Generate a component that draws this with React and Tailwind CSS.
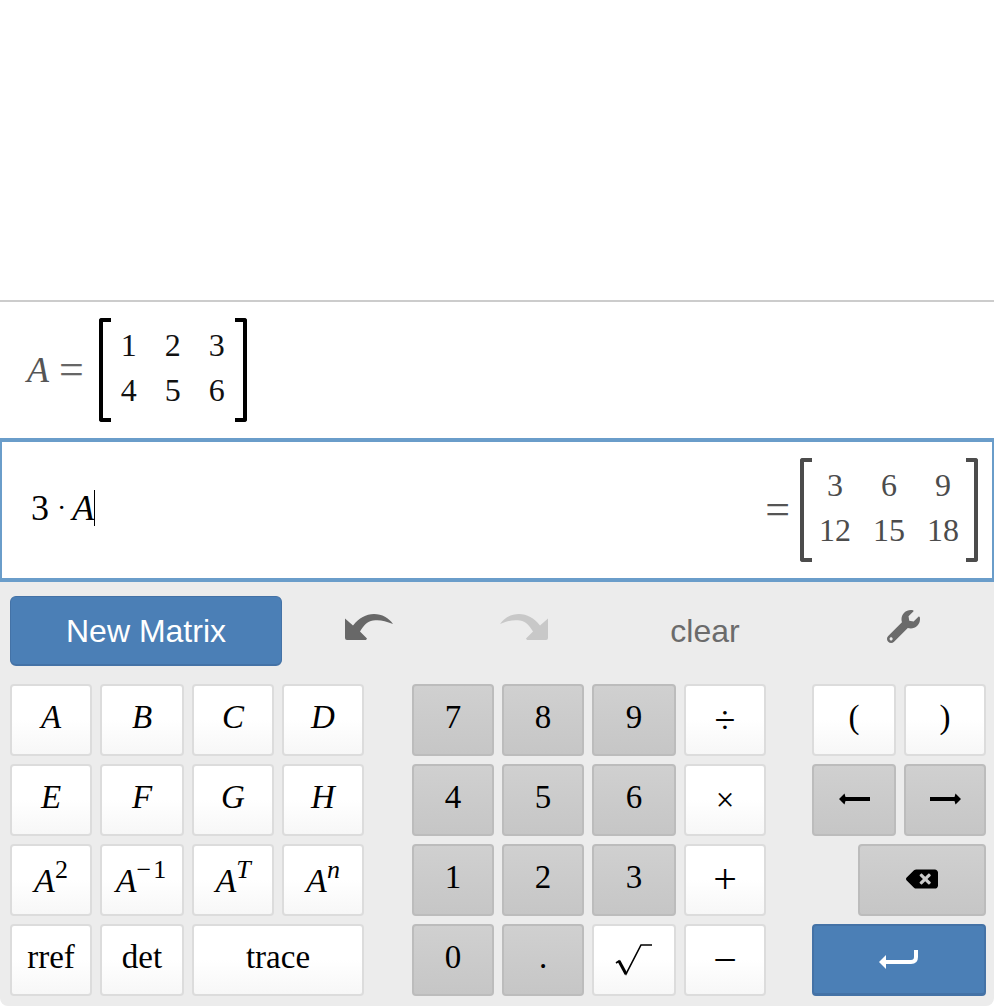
import React from "react";
import { FaWrench, FaBackspace } from "react-icons/fa";

const serif = "font-['Liberation_Serif',serif]";
const white = "bg-gradient-to-b from-white from-50% to-[#f7f7f7] border-[#dcdcdc] text-black";
const gray = "bg-gradient-to-b from-[#d0d0d0] to-[#c6c6c6] border-[#bcbcbc] text-black";
const blue = "bg-[#4b7fb6] border-[#4472a6] text-white";

function Key({ kind = "white", icon = false, className = "", children }) {
  const tone = kind === "gray" ? gray : kind === "blue" ? blue : white;
  return (
    <div className={`flex items-center justify-center h-[72px] rounded-[4px] border-2 ${serif} text-[33px] leading-none ${icon ? "" : "pb-[6px]"} ${tone} ${className}`}>
      {children}
    </div>
  );
}

function Matrix({ rows, colW, color, textColor }) {
  const edge = `w-[12px] h-[104px] border-y-4 ${color} shrink-0`;
  return (
    <div className="flex items-center">
      <div className={`${edge} border-l-4 rounded-l-[3px]`} />
      <div className={`-mx-[4px] pb-[4px] grid grid-cols-3 ${serif} text-[32px] leading-[45px] text-center ${textColor}`}>
        {rows.flat().map((v, i) => (
          <div key={i} className={colW}>{v}</div>
        ))}
      </div>
      <div className={`${edge} border-r-4 rounded-r-[3px]`} />
    </div>
  );
}

function Undo({ color, flip }) {
  return (
    <svg width="48" height="26" viewBox="0 0 48 26" className={flip ? "-scale-x-100" : ""}>
      <path
        fill={color}
        d="M0 4.5 L8 11.5 C14 4 21 0 29 0 C37 0 44 4 48 10 C40 6.5 34 5.5 28 6.5 C22 7.5 19 11 15 17.5 L22 24.5 L21 26 L2 26 Q0 26 0 24 Z"
      />
    </svg>
  );
}

function Arrow({ right }) {
  return (
    <svg width="31" height="12" viewBox="0 0 31 12" className={right ? "-scale-x-100" : ""}>
      <path fill="#000" d="M0 6 L5.5 0.5 L6.5 4 L31 4 L31 8 L6.5 8 L5.5 11.5 Z" />
    </svg>
  );
}

function Pow({ sup, italic, wide }) {
  return (
    <span className="whitespace-nowrap">
      <i className="text-[34px]">A</i>
      <span className={`text-[26px] align-[14px] ${italic ? "italic" : ""} ${wide ? "tracking-[2px]" : ""}`}>{sup}</span>
    </span>
  );
}

export default function App() {
  return (
    <div className="w-[994px] h-[1006px] bg-white flex flex-col overflow-hidden">
      <div className="h-[300px] shrink-0" />

      <div className="h-[138px] shrink-0 border-t-2 border-[#cccccc] flex items-center pl-[27px]">
        <span className={`${serif} italic text-[36px] text-[#555555] leading-none`}>A</span>
        <span className={`${serif} text-[44px] text-[#666666] leading-none ml-[10px] mr-[15px]`}>=</span>
        <Matrix
          rows={[[1, 2, 3], [4, 5, 6]]}
          colW="w-[44px]"
          color="border-black"
          textColor="text-[#111111]"
        />
      </div>

      <div className="h-[144px] shrink-0 border-y-4 border-x-2 border-[#6a9dca] flex items-center justify-between pl-[29px] pr-[14px]">
        <div className={`flex items-center pb-[4px] ${serif} text-[36px] leading-none text-black`}>
          <span>3</span>
          <span className="ml-[8px] mr-[6px] text-[28px]">·</span>
          <i>A</i>
          <span className="inline-block w-px h-[36px] bg-black" />
        </div>
        <div className="flex items-center">
          <span className={`${serif} text-[44px] text-[#555555] leading-none mr-[10px]`}>=</span>
          <Matrix
            rows={[[3, 6, 9], [12, 15, 18]]}
            colW="w-[54px]"
            color="border-[#4c4c4c]"
            textColor="text-[#4c4c4c]"
          />
        </div>
      </div>

      <div className="flex-1 bg-[#ececec] pt-[14px] pl-[10px] rounded-b-[8px]">
        <div className="flex items-center h-[70px]">
          <div className="w-[272px] h-[70px] rounded-[6px] bg-[#4b7fb6] border border-[#4472a6] border-b-2 flex items-center justify-center text-white text-[32px] font-['Liberation_Sans',sans-serif]">
            New Matrix
          </div>
          <div className="w-[174px] flex justify-center -mt-[8px]"><Undo color="#686868" /></div>
          <div className="w-[136px] flex justify-center -mt-[8px]"><Undo color="#c8c8c8" flip /></div>
          <div className="w-[226px] flex justify-center text-[32px] text-[#6b6b6b] font-['Liberation_Sans',sans-serif]">clear</div>
          <div className="w-[170px] flex justify-center -mt-[10px]"><FaWrench size={33} color="#6b6b6b" /></div>
        </div>

        <div className="flex mt-[18px]">
          <div className="grid grid-cols-[82px_84px_82px_82px] gap-2 shrink-0">
            {["A", "B", "C", "D", "E", "F", "G", "H"].map((k) => (
              <Key key={k} className="italic">{k}</Key>
            ))}
            <Key><Pow sup="2" /></Key>
            <Key><Pow sup="−1" wide /></Key>
            <Key><Pow sup="T" italic /></Key>
            <Key><Pow sup="n" italic /></Key>
            <Key>rref</Key>
            <Key>det</Key>
            <Key className="col-span-2">trace</Key>
          </div>

          <div className="ml-[48px] grid grid-cols-[82px_82px_84px_82px] gap-2 shrink-0">
            <Key kind="gray">7</Key>
            <Key kind="gray">8</Key>
            <Key kind="gray">9</Key>
            <Key icon className="text-[38px]">÷</Key>
            <Key kind="gray">4</Key>
            <Key kind="gray">5</Key>
            <Key kind="gray">6</Key>
            <Key icon className="text-[30px]">×</Key>
            <Key kind="gray">1</Key>
            <Key kind="gray">2</Key>
            <Key kind="gray">3</Key>
            <Key icon className="text-[42px] pb-[2px]">+</Key>
            <Key kind="gray">0</Key>
            <Key kind="gray">.</Key>
            <Key icon>
              <svg width="38" height="32" viewBox="0 0 38 32">
                <path d="M1 19 L4 17 L11 30 L26 1 L37 1" fill="none" stroke="#000" strokeWidth="1.6" />
                <path d="M4 17 L11 30" fill="none" stroke="#000" strokeWidth="3" />
              </svg>
            </Key>
            <Key icon className="text-[42px]">−</Key>
          </div>

          <div className="ml-[46px] grid grid-cols-[84px_82px] gap-2 shrink-0">
            <Key>(</Key>
            <Key>)</Key>
            <Key icon kind="gray" className="pb-[3px]"><Arrow /></Key>
            <Key icon kind="gray" className="pb-[3px]"><Arrow right /></Key>
            <Key icon kind="gray" className="col-span-2 ml-[46px] pb-[2px]"><FaBackspace size={32} color="#000" /></Key>
            <Key icon kind="blue" className="col-span-2 border-b-[3px]">
              <svg width="40" height="21" viewBox="0 0 40 21">
                <path d="M37 1 L37 8 Q37 13 32 13 L6 13" fill="none" stroke="#fff" strokeWidth="4" />
                <path d="M0 13 L7 6 L7 20 Z" fill="#fff" />
              </svg>
            </Key>
          </div>
        </div>
      </div>
    </div>
  );
}
